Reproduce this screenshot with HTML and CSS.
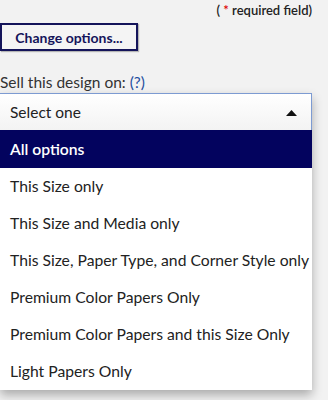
FILE: index.html
```html
<!DOCTYPE html>
<html>
<head>
<meta charset="utf-8">
<link rel="stylesheet" href="styles.css">
</head>
<body>
<div class="page">
  <div class="req">( <span class="star">*</span> required field)</div>
  <button class="change">Change options...</button>
  <div class="label">Sell this design on: <a class="help">(?)</a></div>
  <div class="select">
    <div class="select-box">
      <span>Select one</span>
      <svg class="caret" width="11" height="6" viewBox="0 0 11 6"><path d="M0 6 L5.5 0 L11 6 Z" fill="#111"/></svg>
    </div>
    <ul class="options">
      <li class="opt active">All options</li>
      <li class="opt">This Size only</li>
      <li class="opt">This Size and Media only</li>
      <li class="opt">This Size, Paper Type, and Corner Style only</li>
      <li class="opt">Premium Color Papers Only</li>
      <li class="opt">Premium Color Papers and this Size Only</li>
      <li class="opt">Light Papers Only</li>
    </ul>
  </div>
</div>
</body>
</html>
```
FILE: styles.css
```css
html, body {
  margin: 0;
  padding: 0;
  background: #f2f2f2;
}
body {
  font-family: Lato, "Liberation Sans", sans-serif;
  color: #222;
  width: 328px;
  height: 400px;
  overflow: hidden;
}
.page {
  width: 312px;
  display: flex;
  flex-direction: column;
}
.req {
  text-align: right;
  font-size: 13px;
  font-weight: 600;
  color: #222;
  line-height: 14px;
  padding-top: 3px;
}
.star { color: #d00; }
.change {
  align-self: flex-start;
  margin-top: 6px;
  width: 138px;
  height: 28px;
  border: 2px solid #14145a;
  background: #f4f4f4;
  color: #14145a;
  font-family: inherit;
  font-weight: 700;
  font-size: 14px;
  padding: 0;
  box-shadow: 1px 1px 1px rgba(0,0,0,0.25);
}
.label {
  margin-top: 22px;
  font-size: 15.5px;
  line-height: 18px;
  color: #333;
}
.help { color: #1f4fa0; }
.select {
  margin-top: 2px;
  box-shadow: 0 5px 10px rgba(0,0,0,0.3);
}
.select-box {
  height: 37px;
  box-sizing: border-box;
  border: 1px solid #7d9bd2;
  border-left: 0;
  border-bottom: 0;
  background: linear-gradient(#ffffff, #f3f3f3);
  display: flex;
  align-items: center;
  justify-content: space-between;
  padding: 0 14px 0 10px;
  font-size: 15.5px;
  color: #222;
}
.caret { margin-top: 1px; }
.options {
  list-style: none;
  margin: 0;
  padding: 0;
  background: #fff;
}
.opt {
  height: 37px;
  line-height: 37px;
  padding-left: 10px;
  font-size: 15.7px;
  color: #222;
  white-space: nowrap;
}
.opt.active {
  background: #03035e;
  color: #fff;
  height: 38px;
  line-height: 38px;
  font-weight: 600;
}
```
